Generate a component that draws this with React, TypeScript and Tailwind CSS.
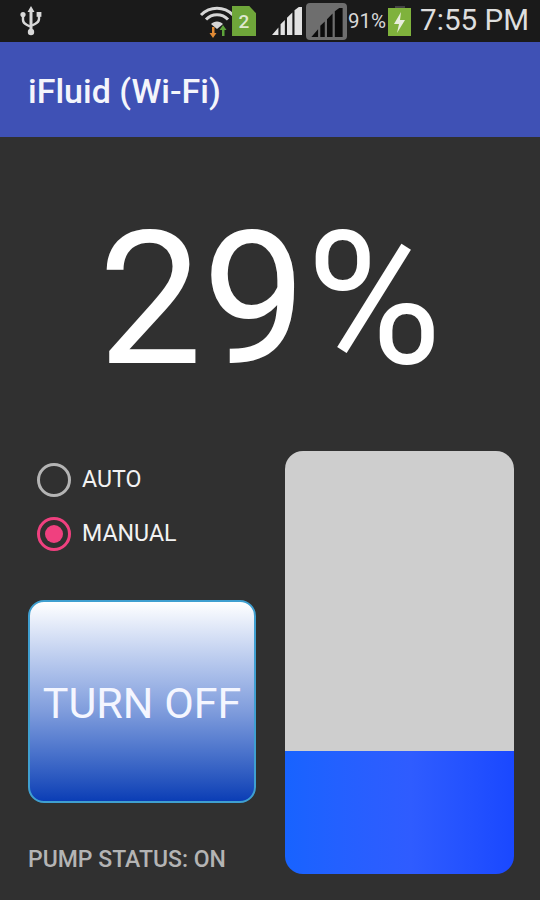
function UsbIcon() {
  return (
    <svg width="24" height="32" viewBox="0 0 24 32" fill="none">
      <path d="M12 1 L15.5 7 H13.5 V26 H10.5 V7 H8.5 Z" fill="#d8d8d8" />
      <circle cx="12" cy="27" r="3.2" fill="#d8d8d8" />
      <path d="M4 11 V15 C4 18 6 19 8 20 L11 21.5" stroke="#d8d8d8" strokeWidth="2.4" />
      <path d="M20 11 V14 C20 17 18 18 16 19 L13 20.5" stroke="#d8d8d8" strokeWidth="2.4" />
      <circle cx="4" cy="9.5" r="2.6" fill="#d8d8d8" />
      <rect x="17.6" y="7" width="4.8" height="4.8" fill="#d8d8d8" />
    </svg>
  );
}

function WifiIcon() {
  return (
    <svg width="36" height="36" viewBox="0 0 36 36" fill="none">
      <path d="M2 12 C11 3 25 3 34 12" stroke="#d6d6d6" strokeWidth="3" />
      <path d="M7 16.5 C13 10 23 10 29 16.5" stroke="#d6d6d6" strokeWidth="3" />
      <path d="M12 21 C15 17.5 21 17.5 24 21 L18 26 Z" fill="#d6d6d6" />
      <path d="M13 24 V30 H10.5 L14 35 L17.5 30 H15.5 V24 Z" fill="#e08a35" />
      <path d="M23 33 V27 H20.5 L24 22 L27.5 27 H25.5 V33 Z" fill="#5da33a" />
    </svg>
  );
}

function SimBadge() {
  return (
    <div className="w-[24px] h-[30px] bg-[#6fa63a] flex items-center justify-center text-[#dfe8d0] text-[19px] font-medium leading-none [clip-path:polygon(0_0,72%_0,100%_24%,100%_100%,0_100%)]">
      2
    </div>
  );
}

function Signal({ fill, w, h }: { fill: string; w: number; h: number }) {
  return (
    <svg width={w} height={h} viewBox="0 0 28 26">
      <path d="M0 26 L6 19 V26 Z M8 26 V16 L12 12 V26 Z M14 26 V10 L19 5 V26 Z M21 26 V3 L25 0 H28 V26 Z" fill={fill} />
    </svg>
  );
}

function BatteryIcon() {
  return (
    <div className="flex flex-col items-center">
      <div className="w-[10px] h-[2px] bg-[#444]" />
      <div className="w-[23px] h-[28px] bg-[#7fb23c] flex items-center justify-center">
        <svg width="15" height="21" viewBox="0 0 13 21">
          <path d="M8 0 L1 12 H6 L4 21 L12 8 H7 Z" fill="#e8eedc" />
        </svg>
      </div>
    </div>
  );
}

function Radio({ label, checked }: { label: string; checked?: boolean }) {
  return (
    <div className="h-[54px] flex items-center gap-[11px]">
      <div
        className={
          checked
            ? 'w-[34px] h-[34px] rounded-full border-[3px] border-[#f0407f] flex items-center justify-center'
            : 'w-[34px] h-[34px] rounded-full border-[3px] border-[#b4b4b4]'
        }
      >
        {checked && <div className="w-[18px] h-[18px] rounded-full bg-[#f0407f]" />}
      </div>
      <span className="text-[23.2px] leading-none text-[#f2f2f2]">{label}</span>
    </div>
  );
}

export default function App() {
  return (
    <div className="w-[540px] h-[900px] overflow-hidden bg-[#303030] flex flex-col font-['Roboto',sans-serif]">
      {/* Status bar */}
      <div className="h-[42px] shrink-0 bg-[#1a1a1a] flex items-center pl-[19px] pr-[11px]">
        <UsbIcon />
        <div className="ml-auto flex items-center">
          <WifiIcon />
          <div className="-ml-[3px]"><SimBadge /></div>
          <div className="ml-[16px]"><Signal fill="#e2e2e2" w={30} h={28} /></div>
          <div className="ml-[4px] w-[41px] h-[37px] rounded-[4px] bg-[#6e6e6e] flex items-end justify-center pb-[3px]">
            <Signal fill="#0c0c0c" w={34} h={29} />
          </div>
          <span className="ml-[1px] text-[20.5px] leading-none text-[#d8d8d8]">91%</span>
          <div className="ml-[2px]"><BatteryIcon /></div>
          <span className="ml-[9px] text-[29.6px] leading-none text-[#dedede]">7:55 PM</span>
        </div>
      </div>

      {/* App bar */}
      <div className="h-[95px] shrink-0 bg-[#3f51b5] flex items-center pl-[28px] pt-[3px]">
        <span className="text-[34px] leading-none font-medium text-[#f4f5fb]">iFluid (Wi-Fi)</span>
      </div>

      {/* Reading */}
      <div className="h-[316px] shrink-0 flex items-center justify-center pt-[8px]">
        <span className="text-[185px] leading-none font-normal text-white">29%</span>
      </div>

      {/* Controls and tank */}
      <div className="flex pl-[28px] -mt-[2px]">
        <div className="w-[228px] flex flex-col pt-[2px]">
          <div className="pl-[9px] flex flex-col">
            <Radio label="AUTO" />
            <Radio label="MANUAL" checked />
          </div>
          <button className="mt-[39px] w-[228px] h-[203px] rounded-[16px] border-2 border-[#3f9fd0] bg-gradient-to-b from-white via-[#7f9cdc] via-55% to-[#0a3db5] text-[43px] leading-none text-[#f4f6ff] pt-[3px]">
            TURN OFF
          </button>
          <span className="mt-[45px] text-[23px] leading-none font-medium text-[#b4b4b4]">PUMP STATUS: ON</span>
        </div>
        <div className="ml-[29px] w-[229px] h-[423px] rounded-[18px] overflow-hidden flex flex-col">
          <div className="h-[300px] bg-[#cecece]" />
          <div className="flex-1 bg-gradient-to-r from-[#1763ff] via-[#2f5cff] via-55% to-[#1a48ff]" />
        </div>
      </div>
    </div>
  );
}
